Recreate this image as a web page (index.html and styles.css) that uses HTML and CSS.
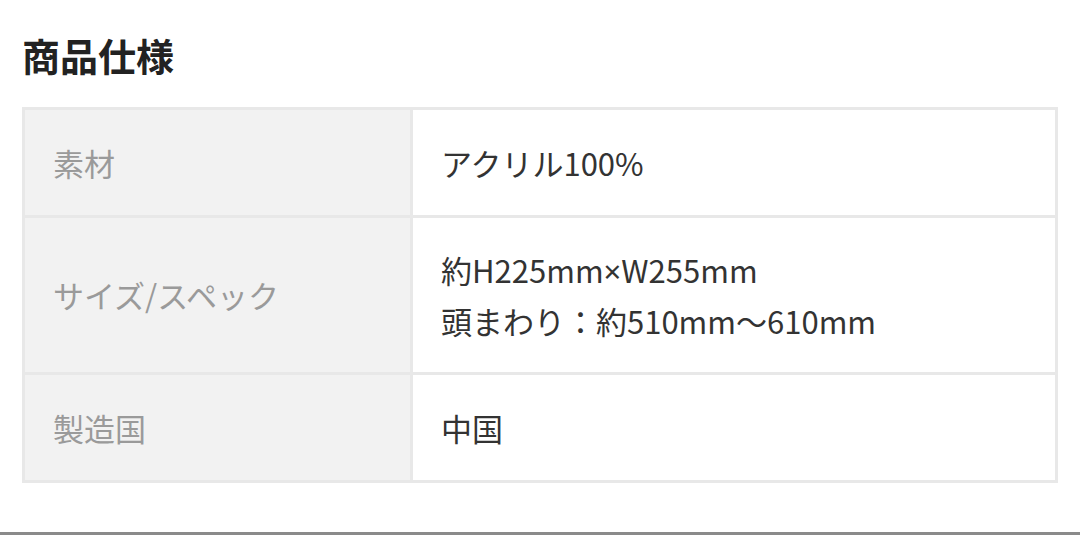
FILE: index.html
```html
<!DOCTYPE html>
<html lang="ja">
<head>
    <meta charset="UTF-8">
    <meta name="viewport" content="width=device-width, initial-scale=1.0">
    <title>商品仕様</title>
    <link rel="stylesheet" href="styles.css">
</head>
<body>
    <div class="page">
        <h2 class="title">商品仕様</h2>
        <table class="spec">
            <tr class="row-short">
                <th>素材</th>
                <td>アクリル100%</td>
            </tr>
            <tr class="row-tall">
                <th>サイズ/スペック</th>
                <td>約H225mm<span class="latin">×</span>W255mm<br>頭まわり：約510mm～610mm</td>
            </tr>
            <tr class="row-short">
                <th>製造国</th>
                <td>中国</td>
            </tr>
        </table>
    </div>
    <div class="bottom-bar"></div>
</body>
</html>
```

FILE: styles.css
```css
body {
    margin: 0;
    padding: 0;
    background: #ffffff;
    font-family: "Noto Sans CJK JP", "Noto Sans", sans-serif;
}

.page {
    height: 532px;
    padding: 0 22px;
    box-sizing: border-box;
    overflow: hidden;
}

.title {
    margin: 0;
    padding-top: 30px;
    height: 107px;
    box-sizing: border-box;
    font-size: 38px;
    line-height: 50px;
    font-weight: bold;
    color: #222;
}

.spec {
    width: 100%;
    border-collapse: collapse;
    border: 3px solid #e8e8e8;
}

.spec th,
.spec td {
    border: 3px solid #e8e8e8;
    text-align: left;
    vertical-align: middle;
    font-size: 31px;
    line-height: 50px;
    font-weight: normal;
    padding: 0 28px;
}

.spec th {
    width: 329px;
    background: #f2f2f2;
    color: #9a9a9a;
}

.spec td {
    color: #333;
}

.latin {
    font-family: "Noto Sans", sans-serif;
}

.row-short {
    height: 108px;
}

.row-tall {
    height: 157px;
}

.bottom-bar {
    height: 3px;
    background: #8a8a8a;
}
```
